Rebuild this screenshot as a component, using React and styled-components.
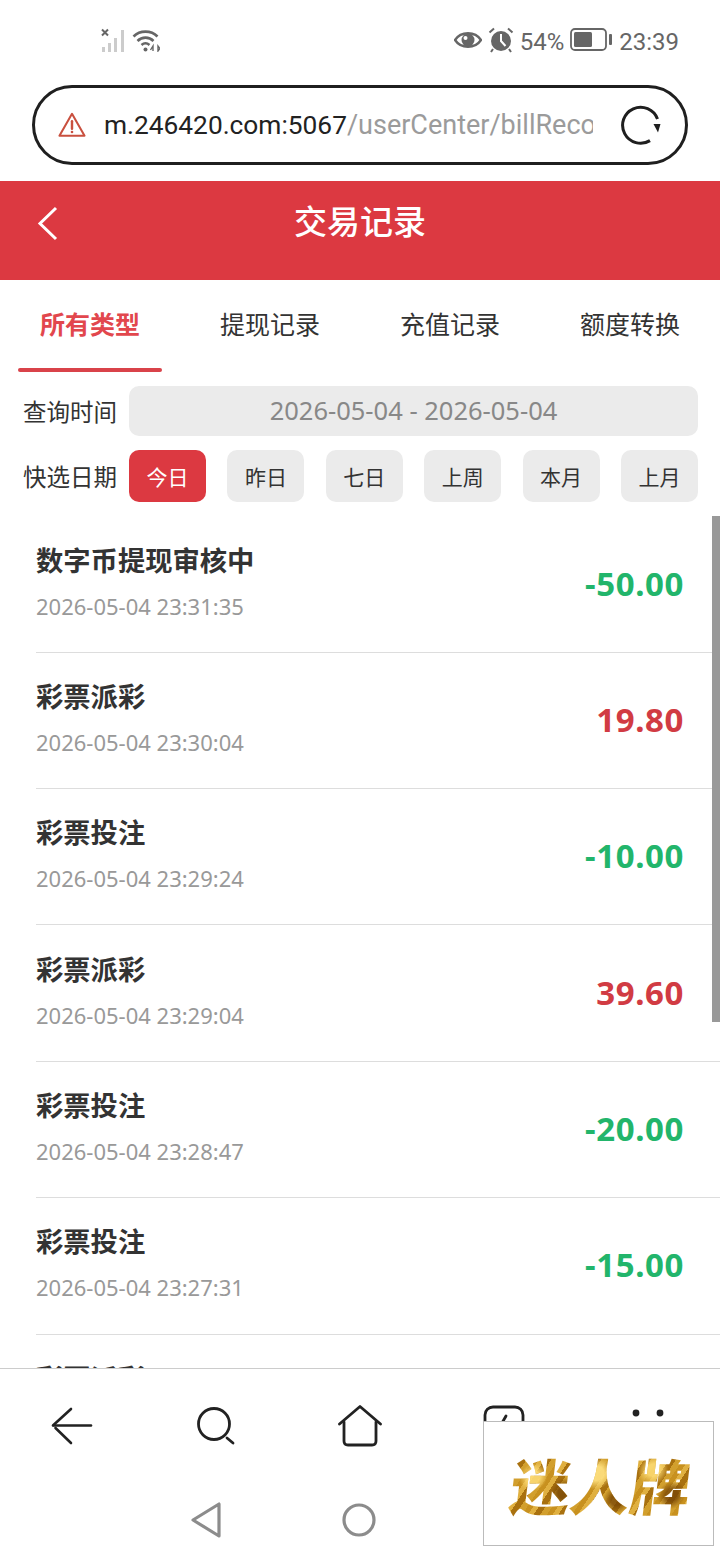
import { createGlobalStyle, styled } from "styled-components";

const GlobalStyle = createGlobalStyle`
  html, body { margin: 0; padding: 0; background: #fff; }
  * { box-sizing: border-box; }
`;

const CJK = `"Noto Sans", "Noto Sans CJK SC", sans-serif`;
const UI = `Roboto, "Noto Sans", sans-serif`;

const Page = styled.div`
  width: 720px;
  height: 1560px;
  position: relative;
  overflow: hidden;
  display: flex;
  flex-direction: column;
  background: #fff;
  font-family: ${CJK};
`;

const StatusBar = styled.div`
  height: 85px;
  flex: none;
  display: flex;
  align-items: center;
  justify-content: space-between;
  padding: 0 40px 5px 101px;
  color: #666;
`;

const StatusGroup = styled.div`
  display: flex;
  align-items: center;
  gap: ${(p) => p.$gap || 6}px;
`;

const StatusText = styled.span`
  font-family: ${UI};
  font-size: 24px;
  line-height: 30px;
  margin: 3px ${(p) => p.$mx || 0}px 0 ${(p) => p.$mx || 0}px;
`;

const AddressBar = styled.div`
  height: 80px;
  flex: none;
  margin: 0 32px;
  border: 3.5px solid #1f1f1f;
  border-radius: 40px;
  display: flex;
  align-items: center;
  padding: 0 24px 0 23px;
  background: #fff;
`;

const AddressText = styled.div`
  flex: 1;
  min-width: 0;
  margin: 0 28px 0 18px;
  overflow: hidden;
  white-space: nowrap;
  font-family: ${UI};
  font-size: 26.3px;
  color: #222;

  span {
    font-size: 27px;
    color: #9b9b9b;
  }
`;

const Header = styled.div`
  height: 99px;
  flex: none;
  margin-top: 16px;
  background: #dc3941;
  position: relative;
  display: flex;
  align-items: center;
  justify-content: center;
  padding-bottom: 22px;
  color: #fff;
  font-size: 33px;
  font-weight: 500;
`;

const BackButton = styled.svg`
  position: absolute;
  left: 36px;
  top: 25px;
`;

const Tabs = styled.div`
  height: 92px;
  flex: none;
  display: grid;
  grid-template-columns: repeat(4, 1fr);
`;

const Tab = styled.div`
  position: relative;
  display: flex;
  align-items: center;
  justify-content: center;
  padding-bottom: 6px;
  font-size: 25px;
  font-weight: ${(p) => (p.$active ? 700 : 400)};
  color: ${(p) => (p.$active ? "#e2474d" : "#333")};

  ${(p) =>
    p.$active &&
    `&::after {
      content: "";
      position: absolute;
      left: 18px;
      right: 18px;
      bottom: 0;
      height: 4px;
      border-radius: 2px;
      background: #d9434a;
    }`}
`;

const Filters = styled.div`
  flex: none;
  height: 144px;
  padding: 14px 22px 0 23px;
  display: flex;
  flex-direction: column;
  gap: 14px;
`;

const FilterRow = styled.div`
  display: flex;
  align-items: center;
  height: ${(p) => p.$h}px;
`;

const FilterLabel = styled.div`
  width: 106px;
  flex: none;
  font-size: 23.5px;
  color: #333;
  white-space: nowrap;
`;

const DateRange = styled.div`
  flex: 1;
  height: 100%;
  padding-bottom: 2px;
  border-radius: 10px;
  background: #ebebeb;
  display: flex;
  align-items: center;
  justify-content: center;
  font-size: 25.5px;
  color: #888;
`;

const Chips = styled.div`
  flex: 1;
  height: 100%;
  display: flex;
  justify-content: space-between;
`;

const Chip = styled.div`
  width: 77px;
  border-radius: 10px;
  display: flex;
  align-items: center;
  justify-content: center;
  font-size: 21px;
  background: ${(p) => (p.$active ? "#dc3941" : "#ebebeb")};
  color: ${(p) => (p.$active ? "#fff" : "#333")};
`;

const ListWrap = styled.div`
  flex: 1;
  min-height: 0;
  position: relative;
  overflow: hidden;
  padding-top: 0.4px;
`;

const Row = styled.div`
  height: 136.36px;
  margin-left: 36px;
  padding: 0 36px 2px 0;
  border-bottom: 1px solid #ddd;
  display: flex;
  align-items: center;
  justify-content: space-between;
`;

const RowInfo = styled.div`
  display: flex;
  flex-direction: column;
  gap: 9px;
`;

const RowTitle = styled.div`
  font-size: 27.3px;
  line-height: 36px;
  font-weight: 700;
  color: #333;
`;

const RowDate = styled.div`
  font-size: 22px;
  line-height: 36px;
  color: #999;
`;

const Amount = styled.div`
  font-size: 33px;
  font-weight: 700;
  letter-spacing: 0.6px;
  color: ${(p) => (p.$income ? "#d13b43" : "#22b56b")};
`;

const Scrollbar = styled.div`
  position: absolute;
  top: 0;
  right: 0;
  width: 8px;
  height: 506px;
  background: #999;
`;

const BottomNav = styled.div`
  height: 192px;
  flex: none;
  border-top: 1px solid #ccc;
  background: #fff;
`;

const NavIcons = styled.div`
  height: 113px;
  display: grid;
  grid-template-columns: repeat(5, 1fr);
  align-items: center;
  justify-items: center;
`;

const SystemKeys = styled.div`
  display: flex;
  justify-content: center;
  align-items: center;
  gap: 120px;
  height: 76px;
`;

const BrandStamp = styled.div`
  position: absolute;
  left: 483px;
  top: 1421px;
  width: 231px;
  height: 125px;
  border: 1px solid #bbb;
  background: #fff;
  display: flex;
  align-items: center;
  justify-content: center;
  padding-left: 4px;
`;

const BrandText = styled.div`
  font-family: "Noto Sans CJK SC", sans-serif;
  font-size: 60px;
  line-height: 70px;
  font-weight: 900;
  white-space: nowrap;
  transform: skewX(-7deg);
  background:
    radial-gradient(circle at 12% 40%, rgba(255, 222, 120, 0.9) 0 6px, transparent 14px),
    radial-gradient(circle at 30% 62%, rgba(120, 70, 5, 0.85) 0 6px, transparent 15px),
    radial-gradient(circle at 47% 35%, rgba(255, 226, 130, 0.9) 0 7px, transparent 16px),
    radial-gradient(circle at 60% 72%, rgba(120, 70, 5, 0.8) 0 6px, transparent 14px),
    radial-gradient(circle at 78% 30%, rgba(255, 222, 120, 0.85) 0 6px, transparent 15px),
    radial-gradient(circle at 90% 66%, rgba(120, 70, 5, 0.8) 0 6px, transparent 14px),
    repeating-linear-gradient(118deg, #c8911f 0 5px, #e0b040 5px 10px, #a9710f 10px 16px, #d29f2d 16px 22px);
  -webkit-background-clip: text;
  background-clip: text;
  -webkit-text-fill-color: transparent;
`;

const records = [
  { title: "数字币提现审核中", date: "2026-05-04 23:31:35", amount: "-50.00" },
  { title: "彩票派彩", date: "2026-05-04 23:30:04", amount: "19.80", income: true },
  { title: "彩票投注", date: "2026-05-04 23:29:24", amount: "-10.00" },
  { title: "彩票派彩", date: "2026-05-04 23:29:04", amount: "39.60", income: true },
  { title: "彩票投注", date: "2026-05-04 23:28:47", amount: "-20.00" },
  { title: "彩票投注", date: "2026-05-04 23:27:31", amount: "-15.00" },
  { title: "彩票派彩", date: "\u00a0", amount: "" },
];

const tabs = ["所有类型", "提现记录", "充值记录", "额度转换"];
const chips = ["今日", "昨日", "七日", "上周", "本月", "上月"];

const SignalIcon = () => (
  <svg width="26" height="24" viewBox="0 0 26 24">
    <path d="M1 1.5l6 6M7 1.5l-6 6" stroke="#666" strokeWidth="2" />
    <g fill="#ccc">
      <rect x="1" y="19" width="3" height="5" />
      <rect x="7" y="15" width="3" height="9" />
      <rect x="13" y="10" width="3" height="14" />
      <rect x="20" y="2" width="3" height="22" />
    </g>
  </svg>
);

const WifiIcon = () => (
  <svg width="28" height="24" viewBox="0 0 28 24" fill="none" stroke="#666" strokeWidth="2.6">
    <path d="M1.5 8.5C8 2 19 2 25.5 8.5" />
    <path d="M5.5 13C10 8.5 17 8.5 21.5 13" />
    <path d="M9.5 17C12 14.8 15 14.8 17.5 17" />
    <circle cx="13.5" cy="21.5" r="2" fill="#666" stroke="none" />
    <path d="M21 23v-5l-2.5 4M26 18v5l2-2.5z" strokeWidth="1.4" />
  </svg>
);

const EyeIcon = () => (
  <svg width="28" height="20" viewBox="0 0 28 20">
    <path d="M1 10C7 1 21 1 27 10C21 19 7 19 1 10Z" fill="none" stroke="#666" strokeWidth="2.4" />
    <circle cx="14" cy="10" r="6.5" fill="#666" />
    <circle cx="11.5" cy="8" r="2" fill="#fff" />
  </svg>
);

const AlarmIcon = () => (
  <svg width="26" height="26" viewBox="0 0 26 26">
    <circle cx="13" cy="14" r="10" fill="#666" />
    <path d="M13 7v7l4.5 5" fill="none" stroke="#fff" strokeWidth="2" />
    <path d="M1.5 5.5L6 1.5M24.5 5.5L20 1.5M5 22l-2 3M21 22l2 3" stroke="#666" strokeWidth="2" />
  </svg>
);

const BatteryIcon = () => (
  <svg width="42" height="24" viewBox="0 0 42 24">
    <rect x="1" y="1" width="35" height="21" rx="4" fill="none" stroke="#666" strokeWidth="1.8" />
    <rect x="4" y="4" width="18" height="15" rx="1.5" fill="#666" />
    <rect x="39" y="6" width="3" height="11" rx="1" fill="#666" />
  </svg>
);

const WarningIcon = () => (
  <svg width="28" height="26" viewBox="0 0 30 28" fill="none" stroke="#c9503f" strokeWidth="2.2" strokeLinejoin="round">
    <path d="M15 2L28.5 25.5H1.5Z" />
    <path d="M15 10v8" strokeLinecap="round" strokeWidth="2.6" />
    <circle cx="15" cy="21.5" r="1.4" fill="#c9503f" stroke="none" />
  </svg>
);

const ReloadIcon = () => (
  <svg width="40" height="40" viewBox="0 0 40 40" fill="none" stroke="#1f1f1f" strokeWidth="3">
    <path d="M29 35.6A18 18 0 1 1 36.5 14" />
    <path d="M32.5 19H39.5L37 27.5Z" fill="#1f1f1f" stroke="none" />
  </svg>
);

const NavBack = () => (
  <svg width="42" height="38" viewBox="0 0 42 38" fill="none" stroke="#222" strokeWidth="2.6" strokeLinecap="round">
    <path d="M2 18.5H40" />
    <path d="M20 2L2.5 18" />
    <path d="M4.5 21L20 36" />
  </svg>
);

const NavSearch = () => (
  <svg width="38" height="38" viewBox="0 0 38 38" fill="none" stroke="#222" strokeWidth="2.8" strokeLinecap="round">
    <circle cx="17" cy="17" r="15.5" />
    <path d="M30 31l6 5" />
  </svg>
);

const NavHome = () => (
  <svg width="44" height="42" viewBox="0 0 44 42" fill="none" stroke="#222" strokeWidth="2.8" strokeLinecap="round" strokeLinejoin="round">
    <path d="M1.5 19L22 1.5L42.5 19" />
    <path d="M6 17V36Q6 40 10 40H34Q38 40 38 36V17" />
  </svg>
);

const NavTabs = () => (
  <svg width="42" height="42" viewBox="0 0 42 42" fill="none" stroke="#222" strokeWidth="2.8" strokeLinecap="round">
    <rect x="2" y="2" width="38" height="38" rx="8" />
    <path d="M23 11l-4 7" />
  </svg>
);

const NavMore = () => (
  <svg width="42" height="42" viewBox="0 0 42 42" fill="#222">
    <circle cx="9" cy="8" r="3.4" />
    <circle cx="33" cy="8" r="3.4" />
    <circle cx="9" cy="32" r="3.4" />
    <circle cx="33" cy="32" r="3.4" />
  </svg>
);

const KeyBack = () => (
  <svg width="32" height="36" viewBox="0 0 32 36" fill="none" stroke="#8c8c8c" strokeWidth="3.2" strokeLinejoin="round">
    <path d="M29 2V34L3 18Z" />
  </svg>
);

const KeyHome = () => (
  <svg width="34" height="34" viewBox="0 0 34 34" fill="none" stroke="#8c8c8c" strokeWidth="3.2">
    <circle cx="17" cy="17" r="15" />
  </svg>
);

const KeyRecent = () => (
  <svg width="34" height="34" viewBox="0 0 34 34" fill="none" stroke="#8c8c8c" strokeWidth="3.2">
    <rect x="2" y="2" width="30" height="30" rx="3" />
  </svg>
);

const App = () => {
  return (
    <Page>
      <GlobalStyle />
      <StatusBar>
        <StatusGroup $gap={5}>
          <SignalIcon />
          <WifiIcon />
        </StatusGroup>
        <StatusGroup $gap={6}>
          <EyeIcon />
          <AlarmIcon />
          <StatusText>54%</StatusText>
          <BatteryIcon />
          <StatusText $mx={1}>23:39</StatusText>
        </StatusGroup>
      </StatusBar>
      <AddressBar>
        <WarningIcon />
        <AddressText>
          m.246420.com:5067<span>/userCenter/billRecord</span>
        </AddressText>
        <ReloadIcon />
      </AddressBar>
      <Header>
        <BackButton width="24" height="36" viewBox="0 0 24 36" fill="none" stroke="#fff" strokeWidth="3">
          <path d="M20 2L4 17.5L20 33" />
        </BackButton>
        交易记录
      </Header>
      <Tabs>
        {tabs.map((tab, i) => (
          <Tab key={tab} $active={i === 0}>
            {tab}
          </Tab>
        ))}
      </Tabs>
      <Filters>
        <FilterRow $h={50}>
          <FilterLabel>查询时间</FilterLabel>
          <DateRange>2026-05-04 - 2026-05-04</DateRange>
        </FilterRow>
        <FilterRow $h={52}>
          <FilterLabel>快选日期</FilterLabel>
          <Chips>
            {chips.map((chip, i) => (
              <Chip key={chip} $active={i === 0}>
                {chip}
              </Chip>
            ))}
          </Chips>
        </FilterRow>
      </Filters>
      <ListWrap>
        {records.map((r, i) => (
          <Row key={i}>
            <RowInfo>
              <RowTitle>{r.title}</RowTitle>
              <RowDate>{r.date}</RowDate>
            </RowInfo>
            <Amount $income={r.income}>{r.amount}</Amount>
          </Row>
        ))}
        <Scrollbar />
      </ListWrap>
      <BottomNav>
        <NavIcons>
          <NavBack />
          <NavSearch />
          <NavHome />
          <NavTabs />
          <NavMore />
        </NavIcons>
        <SystemKeys>
          <KeyBack />
          <KeyHome />
          <KeyRecent />
        </SystemKeys>
      </BottomNav>
      <BrandStamp>
        <BrandText>迷人牌</BrandText>
      </BrandStamp>
    </Page>
  );
};

export default App;
